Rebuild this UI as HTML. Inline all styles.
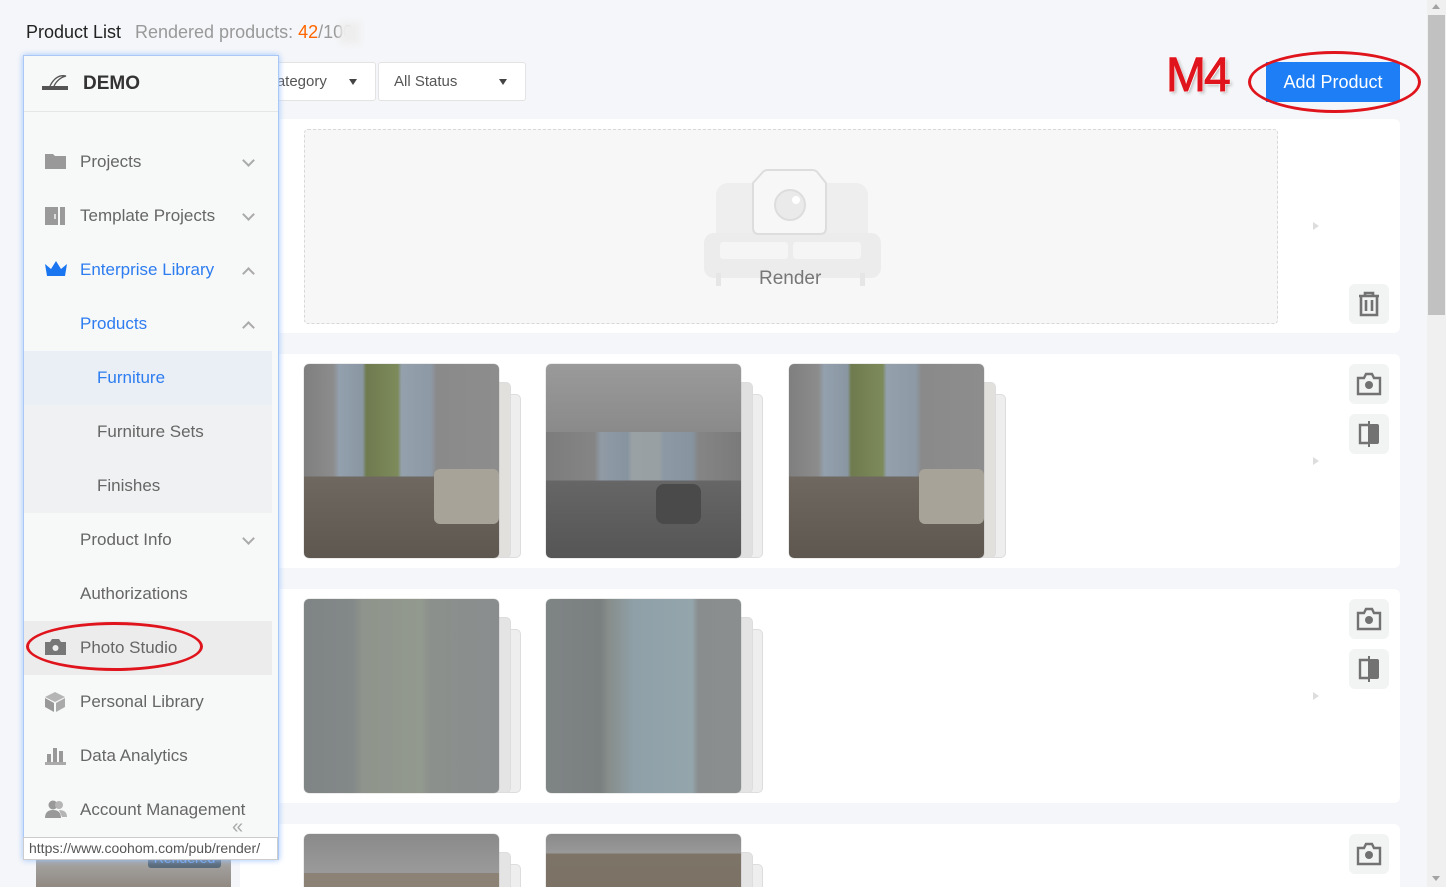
<!DOCTYPE html>
<html><head><meta charset="utf-8"><style>
*{box-sizing:border-box;margin:0;padding:0}
html,body{width:1446px;height:887px;overflow:hidden}
body{background:#f5f6f9;font-family:"Liberation Sans",sans-serif}
#w{position:relative;width:1446px;height:887px;overflow:hidden}
.abs{position:absolute}
.card{position:absolute;left:240px;width:1160px;background:#fff;border-radius:6px}
.btn{position:absolute;left:1349px;width:40px;height:40px;background:#f2f3f3;border-radius:6px;display:flex;align-items:center;justify-content:center}
.img{position:absolute;width:195px;height:194px;border-radius:5px;overflow:hidden;box-shadow:0 0 1px #888}
.fr{position:absolute;border:1px solid #ddd;border-radius:5px;background:#eee}
.tri{position:absolute;left:1313px;width:0;height:0;border-left:6px solid #ddd;border-top:4px solid transparent;border-bottom:4px solid transparent}
.side{position:absolute;left:23px;top:55px;width:256px;height:805px;background:#f7f8f8;border:1px solid #a9c8f5;box-shadow:0 0 6px #9cc3ff}
.mi{position:absolute;left:0;width:248px;height:54px;font-size:17px;color:#666;line-height:54px}
.mi .t{position:absolute;left:56px}
.mi .ic{position:absolute;left:21px;top:17px}
.chev{position:absolute;left:220px;top:21px;width:9px;height:9px;border-right:2px solid #aaa;border-bottom:2px solid #aaa;transform:rotate(45deg)}
.chev.up{transform:rotate(-135deg);top:26px}
</style></head><body><div id="w">
<div class="abs" style="left:26px;top:22px;font-size:18px;color:#222">Product List</div>
<div class="abs" style="left:135px;top:22px;font-size:18px;color:#999">Rendered products: <span style="color:#f60">42</span>/100</div>
<div class="abs" style="left:340px;top:22px;width:20px;height:22px;background:#eee;filter:blur(3px)"></div>

<div class="abs" style="left:230px;top:62px;width:146px;height:39px;background:#fff;border:1px solid #e3e3e3;border-radius:3px;font-size:15px;color:#555;line-height:37px;padding-left:35px">Category<span style="position:absolute;left:118px;top:16px;border-top:6px solid #444;border-left:4px solid transparent;border-right:4px solid transparent"></span></div>
<div class="abs" style="left:378px;top:62px;width:148px;height:39px;background:#fff;border:1px solid #e3e3e3;border-radius:3px;font-size:15px;color:#555;line-height:37px;padding-left:15px">All Status<span style="position:absolute;left:120px;top:16px;border-top:6px solid #444;border-left:4px solid transparent;border-right:4px solid transparent"></span></div>

<div class="abs" style="left:1166px;top:50px;font-size:48px;color:#e0141c;letter-spacing:-2px;text-shadow:0 0 2px #fff,1px 1px 0 #fff,-1px -1px 0 #fff,2px 2px 3px #aaa;line-height:52px;-webkit-text-stroke:1px #e0141c">M4</div>
<div class="abs" style="left:1266px;top:62px;width:134px;height:40px;background:#1d7ef5;color:#fff;font-size:18px;line-height:40px;text-align:center">Add Product</div>
<div class="abs" style="left:1248px;top:51px;width:173px;height:62px;border:3px solid #e0141c;border-radius:50%"></div>

<!-- card 1 -->
<div class="card" style="top:119px;height:214px"></div>
<div class="abs" style="left:304px;top:129px;width:974px;height:195px;border:1px dashed #d8d8d8;border-radius:4px;background:#f7f7f7"></div>
<svg class="abs" style="left:700px;top:165px" width="185" height="125" viewBox="0 0 185 125">
<rect x="16" y="18" width="152" height="95" rx="12" fill="#eeeeee"/>
<rect x="4" y="68" width="177" height="45" rx="10" fill="#ececec"/>
<rect x="20" y="77" width="68" height="17" rx="3" fill="#f5f5f5"/><rect x="93" y="77" width="68" height="17" rx="3" fill="#f5f5f5"/>
<rect x="16" y="108" width="5" height="13" fill="#e6e6e6"/><rect x="160" y="108" width="5" height="13" fill="#e6e6e6"/>
<path d="M53 18 L62 8 Q64 5 68 5 L112 5 Q116 5 118 8 L126 18 L126 63 Q126 69 120 69 L59 69 Q53 69 53 63 Z" fill="#f7f7f7" stroke="#ddd" stroke-width="2"/>
<circle cx="90" cy="40" r="15" fill="#eaeaea" stroke="#ddd" stroke-width="2"/><circle cx="96" cy="35" r="4" fill="#fff"/>
</svg>
<div class="abs" style="left:759px;top:268px;font-size:19px;color:#777">Render</div>
<div class="tri" style="top:222px"></div>
<div class="btn" style="top:284px"><svg width="24" height="26" viewBox="0 0 24 26"><path d="M2 5H22M8 5V2H16V5M4 5V24H20V5M9 9V20M15 9V20" fill="none" stroke="#727272" stroke-width="2.6"/></svg></div>

<!-- card 2 -->
<div class="card" style="top:354px;height:214px"></div>
<div class="tri" style="top:457px"></div>
<div class="btn" style="top:364px"><svg width="26" height="24" viewBox="0 0 26 24"><path d="M2 6H8L10 2H16L18 6H24V22H2Z" fill="none" stroke="#727272" stroke-width="2.4"/><circle cx="13" cy="13" r="4" fill="#727272"/></svg></div>
<div class="btn" style="top:414px"><svg width="26" height="28" viewBox="0 0 26 28"><path d="M13 5H4V23H13" fill="none" stroke="#727272" stroke-width="2.4"/><rect x="13" y="4" width="10" height="20" rx="2" fill="#727272"/><rect x="12" y="1" width="2" height="26" fill="#727272"/></svg></div>

<!-- card 3 -->
<div class="card" style="top:589px;height:214px"></div>
<div class="tri" style="top:692px"></div>
<div class="btn" style="top:599px"><svg width="26" height="24" viewBox="0 0 26 24"><path d="M2 6H8L10 2H16L18 6H24V22H2Z" fill="none" stroke="#727272" stroke-width="2.4"/><circle cx="13" cy="13" r="4" fill="#727272"/></svg></div>
<div class="btn" style="top:649px"><svg width="26" height="28" viewBox="0 0 26 28"><path d="M13 5H4V23H13" fill="none" stroke="#727272" stroke-width="2.4"/><rect x="13" y="4" width="10" height="20" rx="2" fill="#727272"/><rect x="12" y="1" width="2" height="26" fill="#727272"/></svg></div>

<!-- card 4 -->
<div class="card" style="top:824px;height:100px"></div>
<div class="btn" style="top:834px"><svg width="26" height="24" viewBox="0 0 26 24"><path d="M2 6H8L10 2H16L18 6H24V22H2Z" fill="none" stroke="#727272" stroke-width="2.4"/><circle cx="13" cy="13" r="4" fill="#727272"/></svg></div>

<!-- images row 2 -->
<div class="fr" style="left:314px;top:394px;width:207px;height:164px"></div><div class="fr" style="left:309px;top:382px;width:202px;height:176px;background:#e2e0dd"></div>
<div class="img" style="left:304px;top:364px;background:linear-gradient(180deg,rgba(0,0,0,0) 58%,#6e6860 58%,#5d5750 100%),linear-gradient(90deg,#7f7f7f 0%,#8c8c8c 15%,#93a0ad 18%,#8a97a3 30%,#6f7b4e 32%,#7d8a5a 48%,#94a0ac 50%,#8d99a5 65%,#8a8a8a 68%,#8d8d8d 100%)"><div style="position:absolute;left:130px;top:105px;width:65px;height:55px;background:#a8a398;border-radius:6px"></div></div>
<div class="fr" style="left:556px;top:394px;width:207px;height:164px"></div><div class="fr" style="left:551px;top:382px;width:202px;height:176px;background:#e0e0e0"></div>
<div class="img" style="left:546px;top:364px;background:linear-gradient(180deg,#9a9a9a 0%,#8a8a8a 35%,rgba(0,0,0,0) 35%),linear-gradient(180deg,rgba(0,0,0,0) 60%,#666 60%,#555 100%),linear-gradient(90deg,#7c7c7c 0%,#858585 25%,#8f9aa5 28%,#8794a0 42%,#9aa1a4 44%,#98a0a3 58%,#8d99a4 60%,#8794a0 75%,#858585 78%,#7a7a7a 100%)"><div style="position:absolute;left:110px;top:120px;width:45px;height:40px;background:#4a4a4a;border-radius:8px"></div></div>
<div class="fr" style="left:799px;top:394px;width:207px;height:164px"></div><div class="fr" style="left:794px;top:382px;width:202px;height:176px;background:#e2e0dd"></div>
<div class="img" style="left:789px;top:364px;background:linear-gradient(180deg,rgba(0,0,0,0) 58%,#6e6860 58%,#5d5750 100%),linear-gradient(90deg,#7f7f7f 0%,#8c8c8c 15%,#93a0ad 18%,#8a97a3 30%,#6f7b4e 32%,#7d8a5a 48%,#94a0ac 50%,#8d99a5 65%,#8a8a8a 68%,#8d8d8d 100%)"><div style="position:absolute;left:130px;top:105px;width:65px;height:55px;background:#a8a398;border-radius:6px"></div></div>

<!-- images row 3 -->
<div class="fr" style="left:314px;top:629px;width:207px;height:164px"></div><div class="fr" style="left:309px;top:617px;width:202px;height:176px;background:#e4e4e4"></div>
<div class="img" style="left:304px;top:599px;background:linear-gradient(90deg,#7f8485 0%,#838889 25%,#8f948c 30%,#92998e 60%,#8b908c 65%,#8a8d8e 100%)"></div>
<div class="fr" style="left:556px;top:629px;width:207px;height:164px"></div><div class="fr" style="left:551px;top:617px;width:202px;height:176px;background:#e4e4e4"></div>
<div class="img" style="left:546px;top:599px;background:linear-gradient(90deg,#7f8485 0%,#7a7f80 28%,#878d8a 32%,#8fa0a8 45%,#94a5ac 75%,#8a8d8e 78%,#8b8e8f 100%)"></div>

<!-- images row 4 -->
<div class="fr" style="left:314px;top:864px;width:207px;height:40px"></div><div class="fr" style="left:309px;top:852px;width:202px;height:40px;background:#e4e4e4"></div>
<div class="img" style="left:304px;top:834px;background:linear-gradient(180deg,#8a8a8a 0%,#9a9a9a 20%,#8c8276 20%,#807566 100%)"></div>
<div class="fr" style="left:556px;top:864px;width:207px;height:40px"></div><div class="fr" style="left:551px;top:852px;width:202px;height:40px;background:#e4e4e4"></div>
<div class="img" style="left:546px;top:834px;background:linear-gradient(180deg,#8a8a8a 0%,#999 10%,#7d7467 10%,#756b5e 100%)"></div>

<div class="abs" style="left:36px;top:855px;width:195px;height:40px;background:linear-gradient(180deg,#aaa,#8a8278)"></div>
<div class="abs" style="left:148px;top:850px;width:73px;height:18px;background:#5a6a7a;color:#6ea0e6;font-size:14px;text-align:center;border-radius:3px">Rendered</div>

<!-- scrollbar -->
<div class="abs" style="left:1427px;top:0;width:19px;height:887px;background:#f0f0f0"></div>
<div class="abs" style="left:1428px;top:15px;width:17px;height:300px;background:#c1c1c1"></div>
<div class="abs" style="left:1432px;top:4px;border-bottom:5px solid #a3a3a3;border-left:4px solid transparent;border-right:4px solid transparent"></div>
<div class="abs" style="left:1432px;top:876px;border-top:5px solid #a3a3a3;border-left:4px solid transparent;border-right:4px solid transparent"></div>

<!-- sidebar -->
<div class="side">
  <svg class="abs" style="left:16px;top:18px" width="30" height="20" viewBox="0 0 30 20"><path d="M10 12 Q16 0 26 2 Q18 4 14 12" fill="none" stroke="#555" stroke-width="1.3"/><rect x="2" y="12" width="26" height="4" fill="#555"/></svg>
  <div class="abs" style="left:59px;top:17px;font-size:19px;font-weight:bold;color:#333">DEMO</div>
  <div class="abs" style="left:0;top:55px;width:254px;height:1px;background:#e6e6e6"></div>

  <div class="mi" style="top:79px"><svg class="ic" width="21" height="18" viewBox="0 0 21 18"><path d="M0 2H8L10 4H21V17H0Z" fill="#999"/></svg><span class="t">Projects</span><span class="chev"></span></div>
  <div class="mi" style="top:133px"><svg class="ic" width="21" height="20" viewBox="0 0 21 20"><rect x="0" y="1" width="13" height="18" fill="#9a9a9a"/><rect x="15" y="1" width="5" height="18" fill="#9a9a9a"/><rect x="9" y="8" width="2" height="5" fill="#ddd"/></svg><span class="t">Template Projects</span><span class="chev"></span></div>
  <div class="mi" style="top:187px;color:#2d7df0"><svg class="ic" width="22" height="18" viewBox="0 0 22 18"><path d="M0 4L6 9L11 1L16 9L22 4L20 16H2Z" fill="#1a75f0"/></svg><span class="t">Enterprise Library</span><span class="chev up"></span></div>
  <div class="mi" style="top:241px;color:#2d7df0"><span class="t">Products</span><span class="chev up"></span></div>
  <div class="mi" style="top:295px;background:#eaeff5;color:#2d7df0"><span class="t" style="left:73px">Furniture</span></div>
  <div class="mi" style="top:349px;background:#f0f1f2"><span class="t" style="left:73px">Furniture Sets</span></div>
  <div class="mi" style="top:403px;background:#f0f1f2"><span class="t" style="left:73px">Finishes</span></div>
  <div class="mi" style="top:457px"><span class="t">Product Info</span><span class="chev"></span></div>
  <div class="mi" style="top:511px"><span class="t">Authorizations</span></div>
  <div class="mi" style="top:565px;background:#ececec"><svg class="ic" width="21" height="18" viewBox="0 0 21 18"><path d="M0 4H5L7 1H14L16 4H21V17H0Z" fill="#777"/><circle cx="10.5" cy="10" r="3" fill="#eee"/></svg><span class="t">Photo Studio</span></div>
  <div class="mi" style="top:619px"><svg class="ic" width="20" height="20" viewBox="0 0 20 20"><path d="M10 0L20 5L10 10L0 5Z" fill="#b5b5b5"/><path d="M0 6L9 11V20L0 15Z" fill="#999"/><path d="M20 6L11 11V20L20 15Z" fill="#aaa"/></svg><span class="t">Personal Library</span></div>
  <div class="mi" style="top:673px"><svg class="ic" width="21" height="19" viewBox="0 0 21 19"><rect x="2" y="8" width="4" height="8" fill="#999"/><rect x="8" y="2" width="4" height="14" fill="#999"/><rect x="14" y="5" width="4" height="11" fill="#999"/><rect x="0" y="16" width="21" height="3" fill="#aaa"/></svg><span class="t">Data Analytics</span></div>
  <div class="mi" style="top:727px"><svg class="ic" width="22" height="18" viewBox="0 0 22 18"><circle cx="8" cy="5" r="4.5" fill="#999"/><path d="M0 18Q0 10 8 10Q16 10 16 18Z" fill="#999"/><circle cx="14" cy="5" r="4" fill="#b5b5b5"/><path d="M14 10Q22 10 22 17H17Z" fill="#b5b5b5"/></svg><span class="t">Account Management</span></div>
  <div class="abs" style="left:208px;top:760px;font-size:20px;color:#aaa">«</div>
</div>
<div class="abs" style="left:23px;top:837px;width:255px;height:23px;background:#fff;border:1px solid #ccc;font-size:14px;color:#555;line-height:21px;padding-left:5px;white-space:nowrap;overflow:hidden">https://www.coohom.com/pub/render/</div>
<div class="abs" style="left:26px;top:622px;width:177px;height:49px;border:3px solid #e0141c;border-radius:50%"></div>
</div></body></html>
